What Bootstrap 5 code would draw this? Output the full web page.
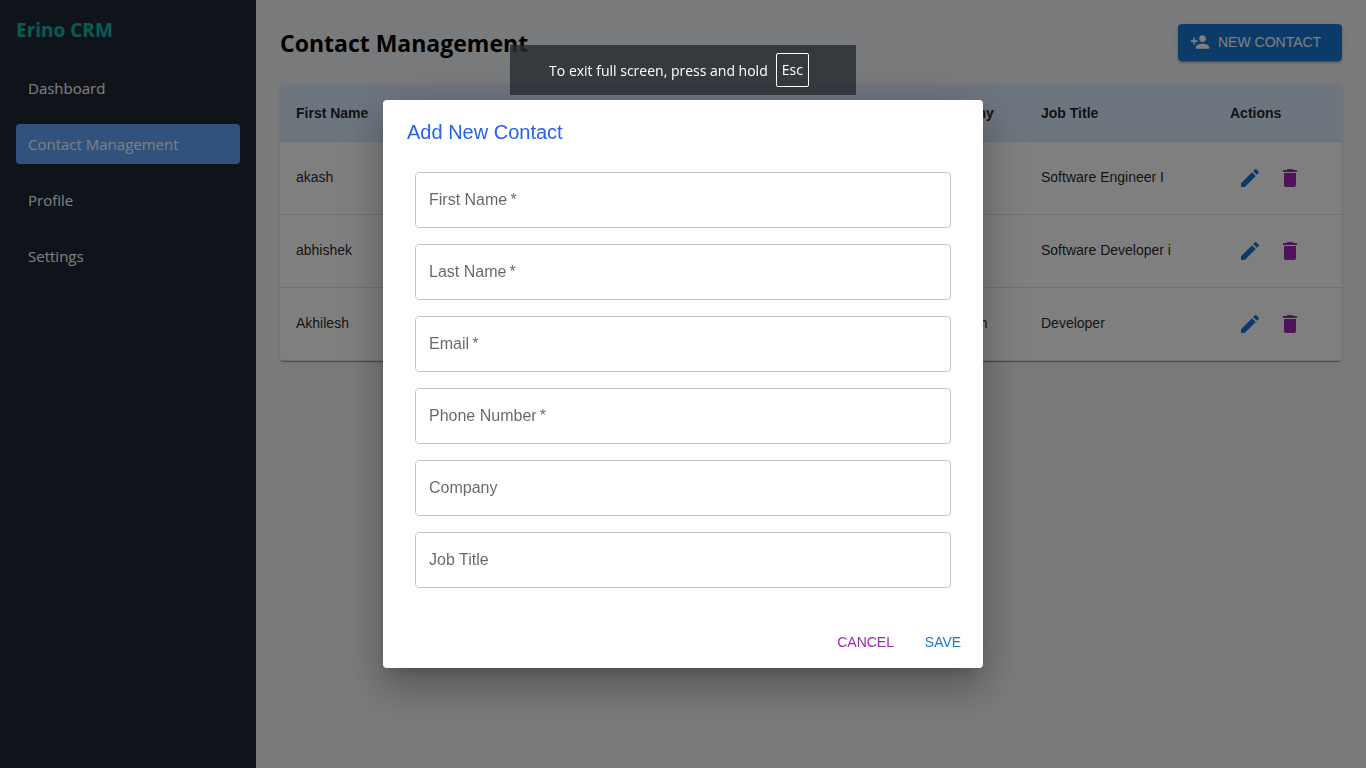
<!DOCTYPE html>
<html lang="en">
<head>
<meta charset="utf-8">
<meta name="viewport" content="width=device-width, initial-scale=1">
<title>Erino CRM - Contact Management</title>
<link href="https://cdn.jsdelivr.net/npm/bootstrap@5.3.0/dist/css/bootstrap.min.css" rel="stylesheet">
<style>
  :root { --ui: "Open Sans", "Noto Sans", sans-serif; --control: "Liberation Sans", Arial, sans-serif; }
  body { font-family: var(--ui); background: #f3f4f6; color: #000; }
  svg { display: block; fill: currentColor; }

  .side-panel { flex: 0 0 256px; background: #1f2937; }
  .brand-name { font-size: 19px; line-height: 28px; color: #14b8a6; }
  .side-panel .nav-link { padding: 8px 12px; font-size: 15px; line-height: 24px; color: #fff; border-radius: 4px; }
  .side-panel .nav-link.active { background: #60a5fa; }

  .page-title { font-size: 23px; line-height: 32px; }
  .btn-contact { min-width: 164px; height: 37px; padding: 0 12px 2px; font: 14px/24px var(--control); color: #fff; background: #1976d2; border: 0; border-radius: 4px;
    box-shadow: 0 3px 1px -2px rgba(0,0,0,.2), 0 2px 2px rgba(0,0,0,.14), 0 1px 5px rgba(0,0,0,.12); }
  .btn-contact:hover { color: #fff; background: #1565c0; }

  .contacts { border-radius: 4px; overflow: hidden; background: #fff;
    box-shadow: 0 2px 1px -1px rgba(0,0,0,.2), 0 1px 1px rgba(0,0,0,.14), 0 1px 3px rgba(0,0,0,.12); }
  .contacts table { table-layout: fixed; font: 14px/20px var(--control); }
  .contacts th, .contacts td { padding: 15px 16px 17px; height: 73px; vertical-align: middle; color: rgba(0,0,0,.87); border-bottom: 1px solid #e0e0e0;
    white-space: nowrap; overflow: hidden; text-overflow: ellipsis; }
  .contacts th { height: 56px; padding: 16px; background: #dbeafe; }
  .contacts td:last-child { padding: 0 16px; }
  .col-company { width: 111px; }
  .col-job { width: 189px; }
  .col-actions { width: 128px; }
  .icon-btn { padding: 8px; border: 0; line-height: 0; }
  .tone-edit, .tone-edit:hover { color: #1976d2; }
  .tone-delete, .tone-delete:hover { color: #9c27b0; }

  .modal-dialog { max-width: 600px; }
  .modal-content { font-family: var(--control); border: 0; border-radius: 4px;
    box-shadow: 0 11px 15px -7px rgba(0,0,0,.2), 0 24px 38px 3px rgba(0,0,0,.14), 0 9px 46px 8px rgba(0,0,0,.12); }
  .modal-title { font-size: 20px; line-height: 32px; color: #2563eb; }
  .modal-body { padding: 8px 32px 28px; }
  .modal-body .form-control { height: 56px; border-color: #c4c4c4; border-radius: 4px; }
  .modal-body label { padding: 15px 13px; color: rgba(0,0,0,.6); }
  .btn-flat { min-width: 64px; height: 36px; padding: 0 9px; font-size: 14px; border: 0; }

  .screen-hint { top: 45px; z-index: 1080; width: 346px; height: 50px; padding-right: 8px; font-size: 14px; color: #fff; background: rgba(37,41,46,.8); }
  .screen-hint kbd { height: 34px; padding: 0 5px; font: 14px/32px var(--ui); background: none; border: 1px solid #fff; border-radius: 2px; }
</style>
</head>
<body>
<svg class="d-none" xmlns="http://www.w3.org/2000/svg">
  <symbol id="i-edit" viewBox="0 0 24 24"><path d="M3 17.25V21h3.75L17.81 9.94l-3.75-3.75L3 17.25zM20.71 7.04c.39-.39.39-1.02 0-1.41l-2.34-2.34a.9959.9959 0 0 0-1.41 0l-1.83 1.83 3.75 3.75 1.83-1.83z"/></symbol>
  <symbol id="i-delete" viewBox="0 0 24 24"><path d="M6 19c0 1.100.9 2 2 2h8c1.100 0 2-.9 2-2V7H6v12zM19 4h-3.500l-1-1h-5l-1 1H5v2h14V4z"/></symbol>
  <symbol id="i-person-add" viewBox="0 0 24 24"><path d="M15 12c2.210 0 4-1.790 4-4s-1.790-4-4-4-4 1.790-4 4 1.790 4 4 4zm-9-2V7H4v3H1v2h3v3h2v-3h3v-2H6zm9 4c-2.670 0-8 1.340-8 4v2h16v-2c0-2.660-5.330-4-8-4z"/></symbol>
</svg>

<div class="d-flex min-vh-100">
  <aside class="side-panel p-3">
    <h2 class="brand-name fw-bold mb-4">Erino CRM</h2>
    <nav class="nav flex-column gap-3" aria-label="Main">
      <a class="nav-link" href="#dashboard">Dashboard</a>
      <a class="nav-link active" href="#contacts" aria-current="page">Contact Management</a>
      <a class="nav-link" href="#profile">Profile</a>
      <a class="nav-link" href="#settings">Settings</a>
    </nav>
  </aside>

  <main class="flex-grow-1 p-4">
    <header class="d-flex justify-content-between align-items-center mb-4">
      <h1 class="page-title fw-bold mb-0">Contact Management</h1>
      <button type="button" class="btn btn-contact d-flex align-items-center gap-2">
        <svg width="20" height="20" aria-hidden="true"><use href="#i-person-add"/></svg>NEW CONTACT
      </button>
    </header>

    <div class="contacts">
      <table class="table table-borderless mb-0">
        <colgroup><col><col><col><col><col class="col-company"><col class="col-job"><col class="col-actions"></colgroup>
        <thead>
          <tr><th>First Name</th><th>Last Name</th><th>Email</th><th>Phone</th><th>Company</th><th>Job Title</th><th>Actions</th></tr>
        </thead>
        <tbody>
          <tr>
            <td>akash</td><td></td><td></td><td></td><td></td><td>Software Engineer I</td>
            <td><div class="d-flex">
              <button type="button" class="btn icon-btn tone-edit" aria-label="Edit akash"><svg width="24" height="24"><use href="#i-edit"/></svg></button>
              <button type="button" class="btn icon-btn tone-delete" aria-label="Delete akash"><svg width="24" height="24"><use href="#i-delete"/></svg></button>
            </div></td>
          </tr>
          <tr>
            <td>abhishek</td><td></td><td></td><td></td><td></td><td>Software Developer i</td>
            <td><div class="d-flex">
              <button type="button" class="btn icon-btn tone-edit" aria-label="Edit abhishek"><svg width="24" height="24"><use href="#i-edit"/></svg></button>
              <button type="button" class="btn icon-btn tone-delete" aria-label="Delete abhishek"><svg width="24" height="24"><use href="#i-delete"/></svg></button>
            </div></td>
          </tr>
          <tr>
            <td>Akhilesh</td><td></td><td></td><td></td><td>BlueTech</td><td>Developer</td>
            <td><div class="d-flex">
              <button type="button" class="btn icon-btn tone-edit" aria-label="Edit Akhilesh"><svg width="24" height="24"><use href="#i-edit"/></svg></button>
              <button type="button" class="btn icon-btn tone-delete" aria-label="Delete Akhilesh"><svg width="24" height="24"><use href="#i-delete"/></svg></button>
            </div></td>
          </tr>
        </tbody>
      </table>
    </div>
  </main>
</div>

<div class="modal-backdrop show"></div>
<div class="modal d-block" tabindex="-1" role="dialog" aria-modal="true" aria-labelledby="contact-title">
  <div class="modal-dialog modal-dialog-centered">
    <form class="modal-content">
      <div class="px-4 py-3"><h2 class="modal-title fw-normal" id="contact-title">Add New Contact</h2></div>
      <div class="modal-body d-flex flex-column gap-3">
        <div class="form-floating"><input class="form-control" id="first" type="text" placeholder=" " required><label for="first">First Name&#8201;*</label></div>
        <div class="form-floating"><input class="form-control" id="last" type="text" placeholder=" " required><label for="last">Last Name&#8201;*</label></div>
        <div class="form-floating"><input class="form-control" id="email" type="email" placeholder=" " required><label for="email">Email&#8201;*</label></div>
        <div class="form-floating"><input class="form-control" id="phone" type="tel" placeholder=" " required><label for="phone">Phone Number&#8201;*</label></div>
        <div class="form-floating"><input class="form-control" id="company" type="text" placeholder=" "><label for="company">Company</label></div>
        <div class="form-floating"><input class="form-control" id="job" type="text" placeholder=" "><label for="job">Job Title</label></div>
      </div>
      <div class="d-flex justify-content-end gap-2 p-2">
        <button type="button" class="btn btn-flat tone-delete">CANCEL</button>
        <button type="submit" class="btn btn-flat tone-edit">SAVE</button>
      </div>
    </form>
  </div>
</div>

<div class="screen-hint position-fixed start-50 translate-middle-x d-flex align-items-center justify-content-center gap-2" role="status">
  <span>To exit full screen, press and hold</span><kbd>Esc</kbd>
</div>
<script src="https://cdn.jsdelivr.net/npm/bootstrap@5.3.0/dist/js/bootstrap.bundle.min.js"></script>
</body>
</html>
